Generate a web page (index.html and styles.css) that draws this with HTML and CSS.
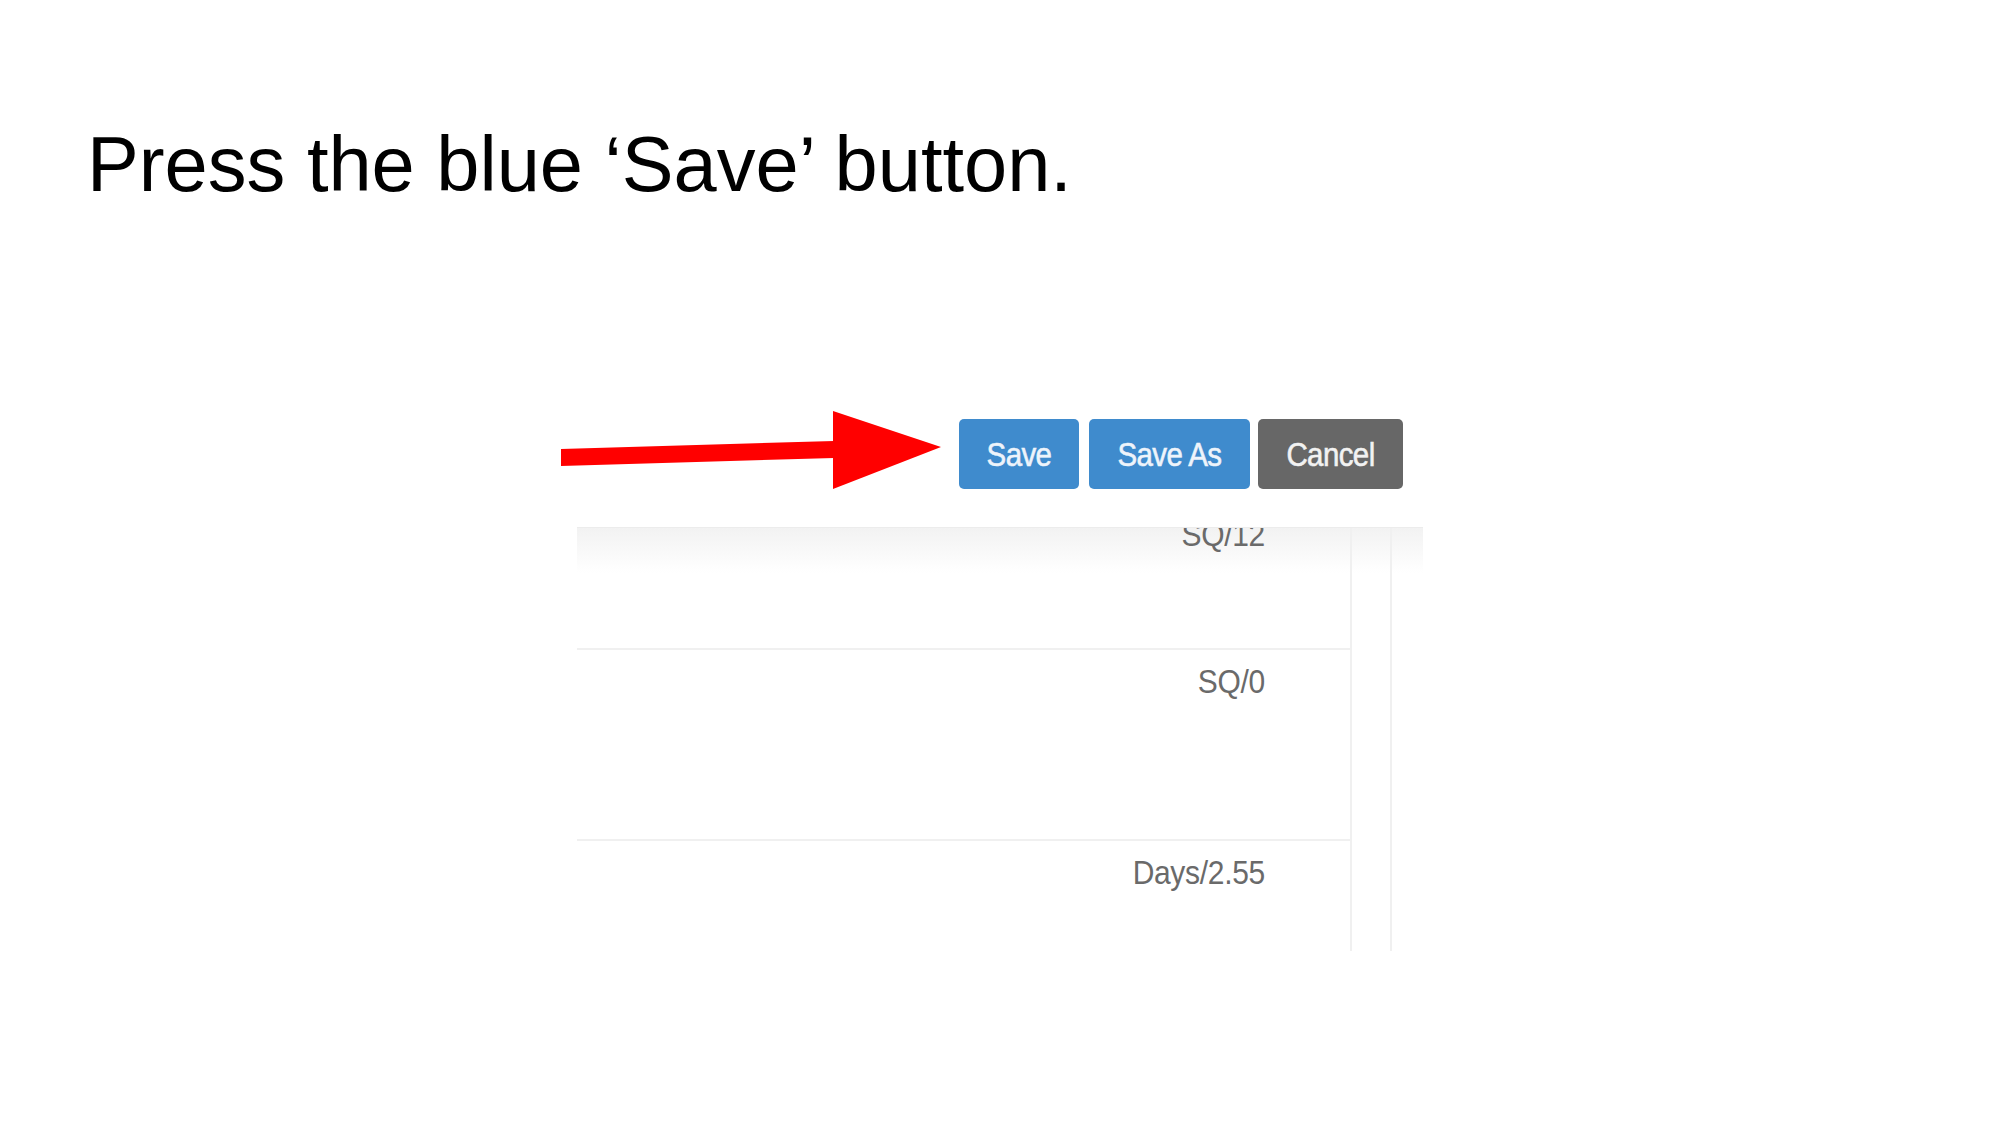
FILE: index.html
```html
<!DOCTYPE html>
<html lang="en">
<head>
<meta charset="utf-8">
<title>Press the blue Save button</title>
<link rel="stylesheet" href="styles.css">
</head>
<body>
<main class="slide">
  <h1 class="title">Press the blue ‘Save’ button.</h1>
  <section class="figure">
    <div class="toolbar">
      <svg class="arrow" width="385" height="80" viewBox="0 0 385 80" aria-hidden="true">
        <polygon points="5,39 278,31 278,48 5,56" fill="#ff0000"/>
        <polygon points="277,1 385,37 277,79" fill="#ff0000"/>
      </svg>
      <div class="buttons">
        <button class="btn btn-primary btn-save"><span class="label">Save</span></button>
        <button class="btn btn-primary btn-saveas"><span class="label">Save As</span></button>
        <button class="btn btn-default btn-cancel"><span class="label">Cancel</span></button>
      </div>
    </div>
    <div class="panel">
      <div class="rows">
        <div class="row row-first"><span class="value">SQ/12</span></div>
        <div class="row row-second"><span class="value">SQ/0</span></div>
        <div class="row row-third"><span class="value">Days/2.55</span></div>
      </div>
      <div class="gutter"></div>
    </div>
  </section>
</main>
</body>
</html>
```

FILE: styles.css
```css
html, body {
  margin: 0;
  padding: 0;
  background: #ffffff;
}

.slide {
  width: 2000px;
  height: 1125px;
  overflow: hidden;
  font-family: "Liberation Sans", Arial, sans-serif;
}

.title {
  margin: 119px 0 0 87px;
  font-size: 77.6px;
  line-height: 90px;
  font-weight: normal;
  color: #000000;
}

.figure {
  margin: 201px 0 0 556px;
}

.toolbar {
  display: flex;
  align-items: flex-start;
  height: 80px;
}

.arrow {
  display: block;
  flex: none;
}

.buttons {
  display: flex;
  margin: 9px 0 0 18px;
}

.btn {
  height: 70px;
  border: none;
  border-radius: 5px;
  font-family: "Liberation Sans", Arial, sans-serif;
  font-size: 29.5px;
  color: #eef4fb;
  padding: 0;
  display: flex;
  align-items: center;
  justify-content: center;
}

.btn .label {
  display: inline-block;
  transform: scaleY(1.15);
  letter-spacing: -0.6px;
  -webkit-text-stroke: 0.5px currentColor;
}

.btn-primary {
  background: #3f8bcd;
}

.btn-default {
  background: #676767;
  color: #f2f2f2;
}

.btn-save {
  width: 120px;
  margin-right: 10px;
}

.btn-saveas {
  width: 161px;
  margin-right: 8px;
}

.btn-cancel {
  width: 145px;
}

.panel {
  margin: 37px 0 0 21px;
  width: 846px;
  height: 423px;
  display: flex;
  overflow: hidden;
  border-top: 1px solid #ececec;
  background: linear-gradient(#f2f2f2, #ffffff 45px) no-repeat;
}

.rows {
  width: 773px;
  margin-top: -25px;
  border-right: 2px solid #f0f0f0;
  flex: none;
}

.gutter {
  width: 38px;
  border-right: 2px solid #f0f0f0;
  flex: none;
}

.row {
  display: flex;
  justify-content: flex-end;
  align-items: flex-start;
  padding: 12px 85px 0 0;
  box-sizing: border-box;
  border-bottom: 2px solid #f0f0f0;
}

.row-first {
  height: 147px;
}

.row-second {
  height: 191px;
}

.row-third {
  height: 200px;
  border-bottom: none;
}

.value {
  display: inline-block;
  font-size: 30px;
  line-height: 40px;
  color: #6a6a6a;
  transform: scaleY(1.1);
  letter-spacing: -0.3px;
}
```
